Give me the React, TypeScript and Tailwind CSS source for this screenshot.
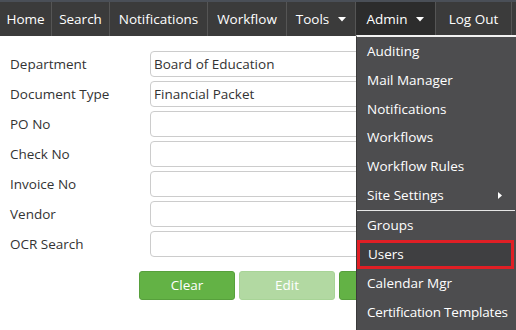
import React from "react";

const font = { fontFamily: '"Segoe UI", "Open Sans", "Noto Sans", sans-serif' };

function Caret() {
  return (
    <svg width="8" height="5" viewBox="0 0 8 5" className="ml-[9px] mt-[1px]">
      <polygon points="0,0 8,0 4,4.5" fill="#ffffff" />
    </svg>
  );
}

export default function App() {
  const nav = [
    { label: "Home", w: "w-[52px]" },
    { label: "Search", w: "w-[58px]" },
    { label: "Notifications", w: "w-[98px]" },
    { label: "Workflow", w: "w-[79px]" },
    { label: "Tools", w: "w-[69px]", caret: true },
    { label: "Admin", w: "w-[80px]", caret: true, active: true },
    { label: "Log Out", w: "w-[76px]" },
  ];
  const fields: [string, string][] = [
    ["Department", "Board of Education"],
    ["Document Type", "Financial Packet"],
    ["PO No", ""],
    ["Check No", ""],
    ["Invoice No", ""],
    ["Vendor", ""],
    ["OCR Search", ""],
  ];
  return (
    <div className="relative w-[516px] h-[330px] overflow-hidden bg-white text-[13.5px]" style={font}>
      <div className="flex h-[36px] bg-[#3b3b3b] border-t-2 border-[#4a4f57]">
        {nav.map((n) => (
          <div
            key={n.label}
            className={`${n.w} flex items-center justify-center border-r border-[#555555] text-white ${
              n.active ? "bg-[#2c2c2c]" : ""
            }`}
          >
            <span>{n.label}</span>
            {n.caret && <Caret />}
          </div>
        ))}
      </div>

      <div className="flex flex-col gap-[4px] pt-[15px]">
        {fields.map(([label, value]) => (
          <div key={label} className="flex items-center h-[26px]">
            <div className="w-[150px] pl-[10px] text-[#333333]">{label}</div>
            <div className="w-[280px] h-[26px] rounded-[4px] border border-[#cccccc] flex items-center pl-[3px] text-[#333333]">
              {value}
            </div>
          </div>
        ))}
      </div>

      <div className="flex gap-[4px] pl-[139px] pt-[14px]">
        <div className="w-[96px] h-[29px] rounded-[3px] bg-[#63b245] border border-[#57a03c] flex items-center justify-center text-white">
          Clear
        </div>
        <div className="w-[96px] h-[29px] rounded-[3px] bg-[#b2d9a2] border border-[#a8d497] flex items-center justify-center text-white">
          Edit
        </div>
        <div className="w-[96px] h-[29px] rounded-[3px] bg-[#63b245] border border-[#57a03c] flex items-center justify-center text-white">
          Search
        </div>
      </div>

      <div className="absolute left-[356px] top-[35px] w-[160px] h-[295px] bg-[#4d4d4f] border-t-2 border-l border-[#f2f2f2] border-l-[#3a3a3a] text-white">
        <div className="h-[29px] flex items-center pl-[10px]">Auditing</div>
        <div className="h-[29px] flex items-center pl-[10px]">Mail Manager</div>
        <div className="h-[28px] flex items-center pl-[10px]">Notifications</div>
        <div className="h-[29px] flex items-center pl-[10px]">Workflows</div>
        <div className="h-[29px] flex items-center pl-[10px]">Workflow Rules</div>
        <div className="h-[28px] flex items-center pl-[10px] pr-[14px] justify-between">
          <span>Site Settings</span>
          <svg width="4" height="7" viewBox="0 0 4 7">
            <polygon points="0,0 4,3.5 0,7" fill="#ffffff" />
          </svg>
        </div>
        <div className="mt-[1px] mr-[1px] h-[1px] bg-[#e6e6e6]" />
        <div className="h-[29px] flex items-center pl-[10px]">Groups</div>
        <div className="h-[29px] flex items-center pl-[8px] border-[3px] border-[#e01f25] bg-[#3f3f41] mr-[2px]">
          Users
        </div>
        <div className="h-[29px] flex items-center pl-[10px]">Calendar Mgr</div>
        <div className="h-[29px] flex items-center pl-[10px] whitespace-nowrap tracking-[-0.2px]">Certification Templates</div>
      </div>
    </div>
  );
}
